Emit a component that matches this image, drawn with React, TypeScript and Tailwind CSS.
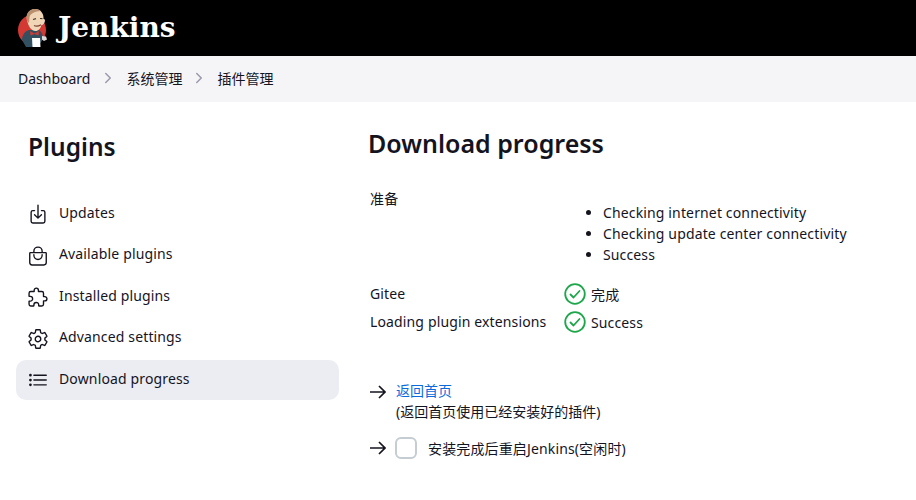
import {
  IoBagHandleOutline,
  IoChevronForward,
  IoDownloadOutline,
  IoExtensionPuzzleOutline,
  IoListOutline,
  IoSettingsOutline,
} from 'react-icons/io5';
import type { ReactNode } from 'react';

const FONT = "font-['Noto_Sans','Noto_Sans_CJK_SC',sans-serif]";

function Logo() {
  return (
    <svg width="32" height="40" viewBox="0 0 32 40" className="shrink-0">
      <ellipse cx="15" cy="22" rx="14" ry="15" fill="#d33833" />
      <path d="M5 32c0-5 3-9 7-10l10 0c3 2 4 5 4 9l-2 3-3 5H9z" fill="#335061" />
      <path d="M10 12C9 6 12 1 18 1s9 5 8.500 10c1.500 0 2 1.500 1 3.500s-2 2.500-3 2.500c-1 3.500-3 6-6 6-4 0-7-4-8.500-11z" fill="#f0d6b7" />
      <path d="M10 13C8 6 12 1 18 1c2 0 4 .8 5.500 2-5 .5-10 2-11 6l-.5 6z" fill="#b98f6d" />
      <path d="M16 11.500l3-.8M23 10.500l2.500.2" stroke="#4a3a2f" strokeWidth="1.200" fill="none" />
      <path d="M17 17.500c2 1 5 .5 7-.8" stroke="#7b3f33" strokeWidth="1.200" fill="none" />
      <path d="M13 23l4.500 2.500 4.500-2.500-.5 4.500-4-1.500-4 1.500z" fill="#d33833" />
      <path d="M15 30h8l.5 9h-8z" fill="#fff" />
      <path d="M25 28l4 .5 1 3-3 1.500-2-1.500z" fill="#dcd9d8" />
    </svg>
  );
}

function Arrow() {
  return (
    <svg width="16" height="14" viewBox="0 0 16 14" fill="none" stroke="#14141f" strokeWidth="1.700" className="shrink-0">
      <path d="M0 7h15M9 1l6 6-6 6" />
    </svg>
  );
}

function Nav({ icon, label, active }: { icon: ReactNode; label: string; active?: boolean }) {
  return (
    <div className={`flex h-10 items-center gap-[10px] rounded-[10px] pl-[11px] ${active ? 'bg-[#ecedf2]' : ''}`}>
      <span className="flex w-[22px] justify-center text-[#14141f]">{icon}</span>
      <span className="mb-[4px] text-[14px] text-[#14141f]">{label}</span>
    </div>
  );
}

function Done({ label }: { label: string }) {
  return (
    <div className="flex items-center gap-[5px]">
      <svg width="22" height="22" viewBox="0 0 22 22" fill="none" stroke="#1ea64b" strokeWidth="1.800" className="shrink-0">
        <circle cx="11" cy="11" r="9.800" />
        <path d="M6.500 11.500l3 3 6-6.500" strokeLinecap="round" strokeLinejoin="round" />
      </svg>
      <span className="text-[14px] text-[#14141f]">{label}</span>
    </div>
  );
}

export default function App() {
  return (
    <div className={`h-[500px] w-[916px] overflow-hidden bg-white tracking-[0.14px] text-[#14141f] ${FONT}`}>
      <header className="flex h-14 items-center bg-black pl-[17px]">
        <Logo />
        <span className="ml-[9px] font-['DejaVu_Serif',serif] text-[28px] leading-none font-bold tracking-normal text-white">
          Jenkins
        </span>
      </header>

      <nav className="flex h-[46px] items-center bg-[#f5f5f7] pb-[2px] pl-[18px] text-[14px] tracking-normal">
        <span>Dashboard</span>
        <IoChevronForward size={16} className="mr-[10px] ml-[10px] text-[#9a9aab]" />
        <span>系统管理</span>
        <IoChevronForward size={16} className="mr-[10px] ml-[9px] text-[#9a9aab]" />
        <span>插件管理</span>
      </nav>

      <div className="flex">
        <aside className="ml-4 w-[323px] shrink-0">
          <h1 className="mt-[27px] mb-[29px] pl-3 text-[24.5px] leading-9 font-semibold tracking-normal">Plugins</h1>
          <div className="flex flex-col gap-[1.6px]">
            <Nav icon={<IoDownloadOutline size={22} />} label="Updates" />
            <Nav icon={<IoBagHandleOutline size={22} />} label="Available plugins" />
            <Nav icon={<IoExtensionPuzzleOutline size={22} />} label="Installed plugins" />
            <Nav icon={<IoSettingsOutline size={22} />} label="Advanced settings" />
            <Nav icon={<IoListOutline size={22} />} label="Download progress" active />
          </div>
        </aside>

        <main className="ml-[29px] flex-1 text-[14px]">
          <h2 className="mt-[23px] text-[25px] leading-9 font-semibold tracking-normal">Download progress</h2>

          <div className="mt-[27px] ml-[2px] grid grid-cols-[194px_1fr]">
            <div className="leading-[21px]">准备</div>
            <ul className="mt-[14px] list-disc pl-[39px] leading-[21px]">
              <li>Checking internet connectivity</li>
              <li>Checking update center connectivity</li>
              <li>Success</li>
            </ul>
            <div className="mt-[18px] leading-[21px]">Gitee</div>
            <div className="mt-[18px]"><Done label="完成" /></div>
            <div className="mt-[6px] leading-[21px]">Loading plugin extensions</div>
            <div className="mt-[6px]"><Done label="Success" /></div>
          </div>

          <div className="mt-[52px] ml-[2px] flex gap-[10px]">
            <Arrow />
            <div className="mt-[-5px] leading-[21px] tracking-normal">
              <a className="text-[#0b6bdb]">返回首页</a>
              <div>(返回首页使用已经安装好的插件)</div>
            </div>
          </div>

          <div className="mt-[15px] ml-[2px] flex items-center gap-[9px]">
            <Arrow />
            <span className="h-[22px] w-[22px] rounded-[6px] border-2 border-[#c5ccd3] bg-white" />
            <span className="ml-[2px]">安装完成后重启Jenkins(空闲时)</span>
          </div>
        </main>
      </div>
    </div>
  );
}
